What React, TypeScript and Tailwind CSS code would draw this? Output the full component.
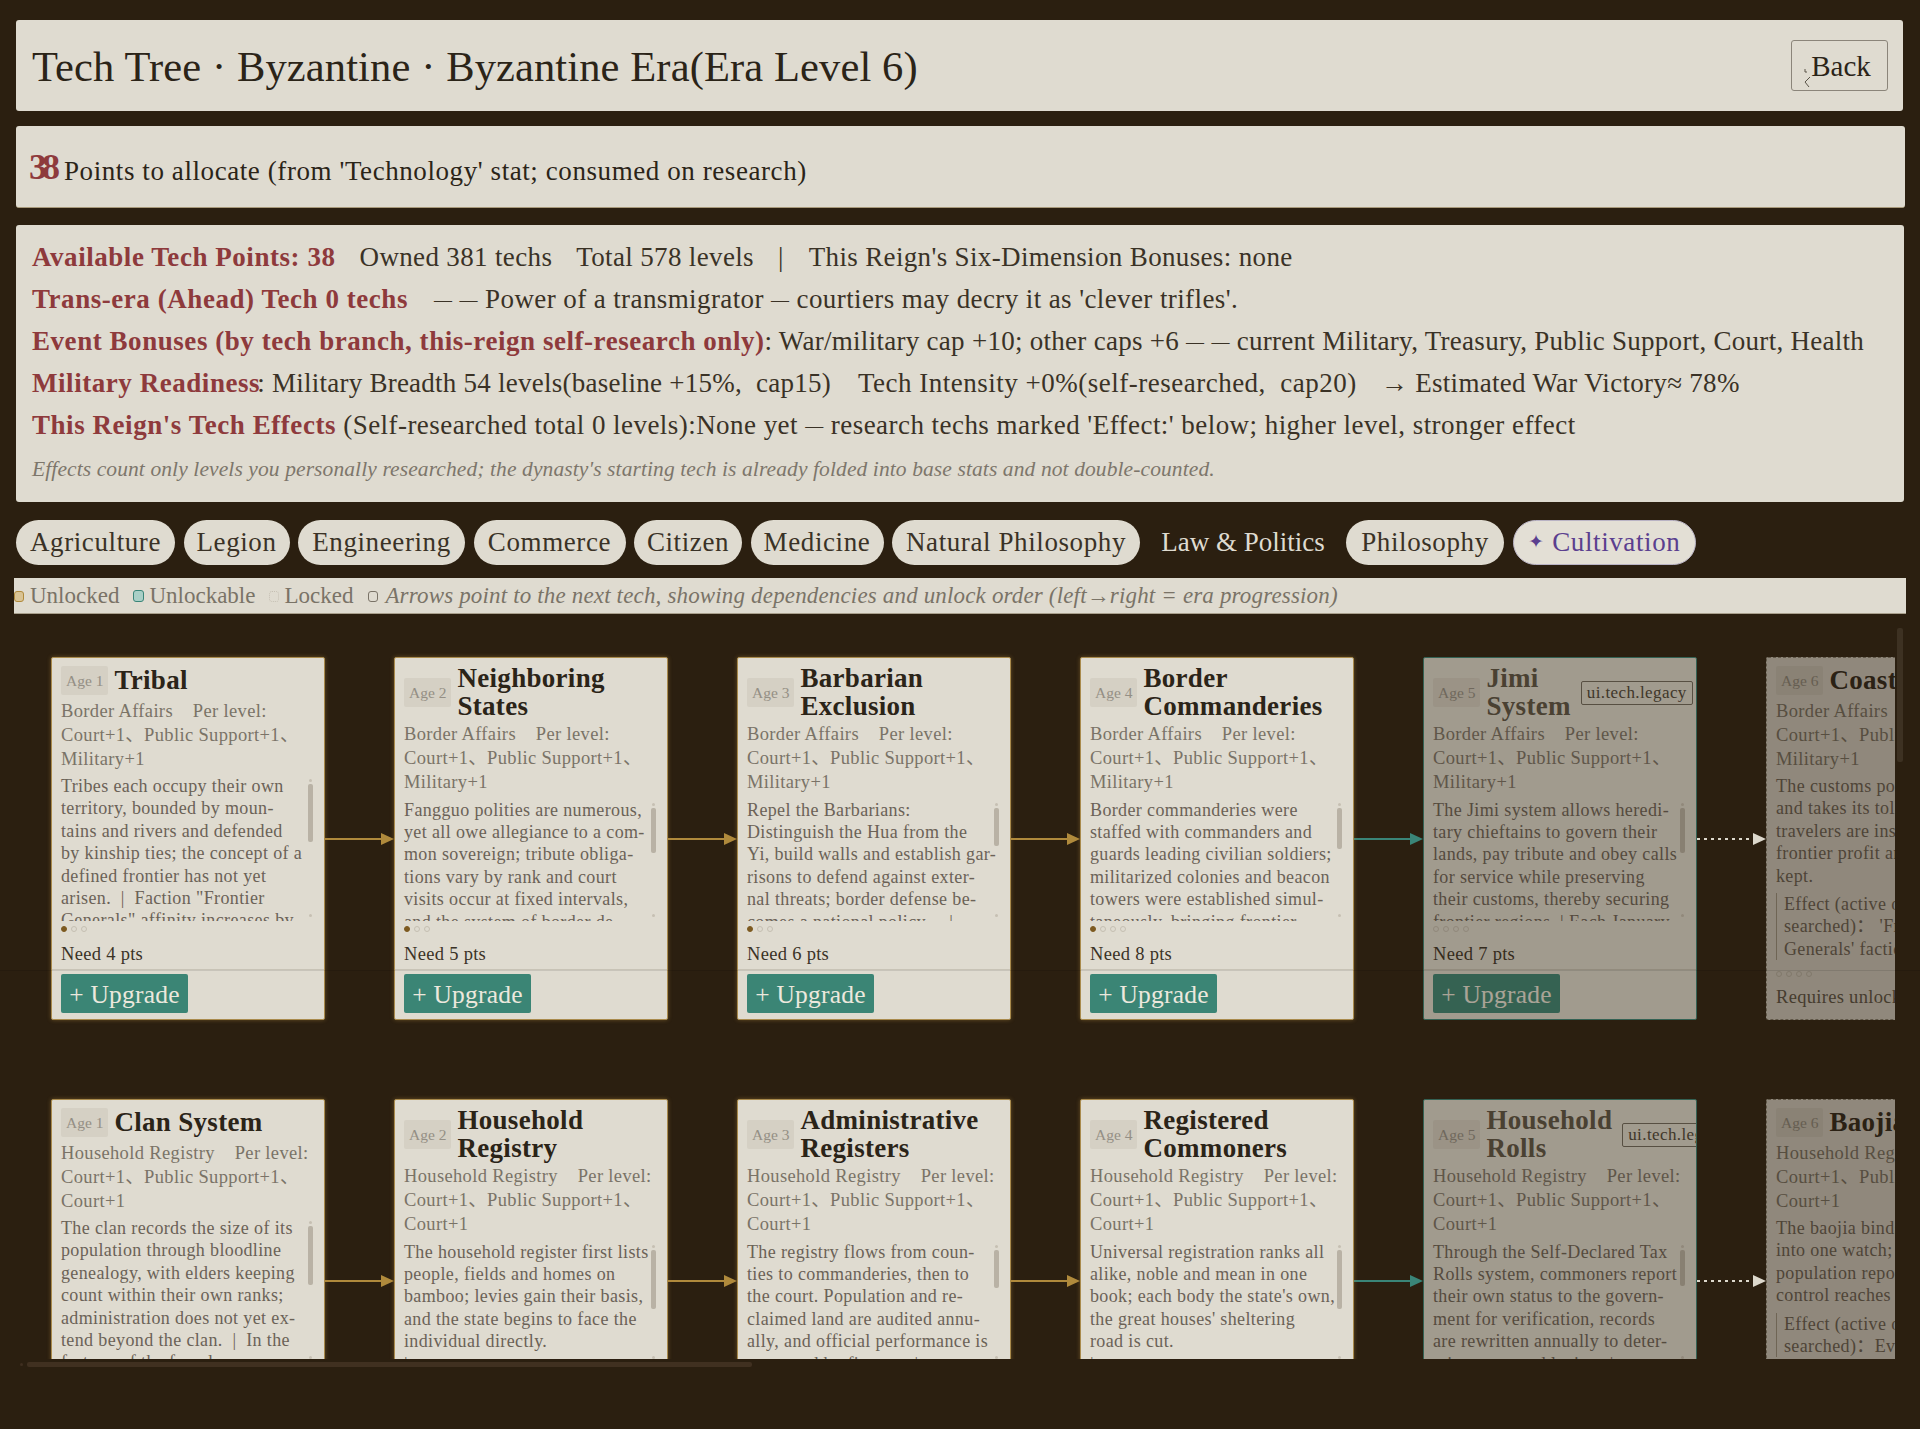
import React from "react";

const F = "font-['Liberation_Serif','Noto_Sans_CJK_SC',serif]";

type C = { age: number; title: string[]; dept: string; last: string; desc: string[]; need: string; dots: number; filled: boolean; thumb: number; thumbLen: number; state: "on" | "next" | "far"; legacy?: boolean; effect?: string[] };

function Arrow({ kind }: { kind: "gold" | "teal" | "dot" }) {
  const col = kind === "gold" ? "#b08a3c" : kind === "teal" ? "#3a8578" : "#ddd8cc";
  return (
    <svg width="69" height="16" viewBox="0 0 69 16" className="shrink-0 self-center">
      <line x1="0" y1="8" x2="58" y2="8" stroke={col} strokeWidth="2" strokeDasharray={kind === "dot" ? "3 4" : undefined} />
      <polygon points="56,2 69,8 56,14" fill={col} />
    </svg>
  );
}

function Card({ c }: { c: C }) {
  const box =
    c.state === "on"
      ? "border-[#a98a4c] shadow-[0_0_4px_rgba(176,138,60,0.45)]"
      : c.state === "next"
        ? "border-[#3a8578] opacity-[0.66]"
        : "border-dashed border-[#8a8475] opacity-[0.56]";
  return (
    <div className={`relative flex h-[363px] w-[274px] shrink-0 flex-col overflow-hidden rounded-[2px] border bg-[#dfdbd0] ${box}`}>
      <div className="flex min-h-[38.5px] items-center pl-[9px] pt-[7px]">
        <span className="flex h-[29px] shrink-0 items-center rounded-[2px] bg-[#d5d0c4] px-[5px] text-[15.5px] text-[#948f85]">Age {c.age}</span>
        <div className={`ml-[6px] shrink-0 whitespace-nowrap text-[27px] font-bold leading-[27.5px] tracking-[0.3px] ${c.state === "next" ? "text-[#5a5345]" : "text-[#2b2418]"}`}>
          {c.title.map((t) => (
            <div key={t}>{t}</div>
          ))}
        </div>
        {c.legacy && (
          <span className="ml-[10px] shrink-0 rounded-[2px] border border-[#6e685c] px-[5px] text-[17px] leading-[22px] tracking-[0.4px] text-[#4a4437]">ui.tech.legacy</span>
        )}
      </div>
      <div className="mt-[2px] pl-[9px] text-[18.5px] leading-[24px] tracking-[0.35px] text-[#7a7367]">
        <div className="whitespace-pre">{c.dept}{"    "}Per level:</div>
        <div className="whitespace-nowrap">Court+1、Public Support+1、</div>
        <div>{c.last}</div>
      </div>
      <div className="relative mt-[4.5px] min-h-0 flex-1 overflow-hidden pl-[9px] text-[18px] leading-[22.4px] tracking-[0.37px] text-[#6b6257]">
        {c.desc.map((l, i) => (
          <div key={i} className="whitespace-pre">{l}</div>
        ))}
        {c.effect && (
          <div className="mt-[6px] border-l border-[#a59d8c] pl-[7px]">
            {c.effect.map((l, i) => (
              <div key={i} className="whitespace-pre">{l}</div>
            ))}
          </div>
        )}
        {!c.effect && (
          <>
            <div className="absolute right-[12px] top-[4px] h-[3px] w-[3px] rounded-full bg-[#c6c0b3]" />
            <div className="absolute right-[11px] w-[5px] rounded-[2px] bg-[#b9b2a5]" style={{ top: c.thumb, height: c.thumbLen }} />
            <div className="absolute bottom-[4px] right-[12px] h-[3px] w-[3px] rounded-full bg-[#c6c0b3]" />
          </>
        )}
      </div>
      <div className="flex h-[16px] shrink-0 items-center gap-[4px] pl-[9px]">
        {Array.from({ length: c.dots }).map((_, i) => (
          <span key={i} className={`h-[6px] w-[6px] rounded-full border ${i === 0 && c.filled ? "border-[#7d5a20] bg-[#7d5a20]" : "border-[#c5bfb2]"}`} />
        ))}
      </div>
      {c.state === "far" ? (
        <div className="pb-[10px] pl-[9px] pt-[3px] text-[18.5px] leading-[24px] tracking-[0.3px] text-[#5b5347]">Requires unlocking prior tech</div>
      ) : (
        <>
          <div className="flex h-[32px] shrink-0 items-center pl-[9px] pt-[4px] text-[18.5px] tracking-[0.3px] text-[#3a3226]">{c.need}</div>
          <div className="shrink-0 border-t border-[#c8c3b6] pb-[6px] pl-[9px] pt-[4px]">
            <button className="flex h-[39px] w-[127px] items-center justify-center rounded-[2px] bg-[#3b8575] pt-[3px] text-[25.5px] tracking-[0.2px] text-[#ece8dd]">+ Upgrade</button>
          </div>
        </>
      )}
    </div>
  );
}

const borderMeta = { dept: "Border Affairs", last: "Military+1" };
const houseMeta = { dept: "Household Registry", last: "Court+1" };

const row1: C[] = [
  { ...borderMeta, age: 1, title: ["Tribal"], need: "Need 4 pts", dots: 3, filled: true, thumb: 9, thumbLen: 58, state: "on", desc: ["Tribes each occupy their own", "territory, bounded by moun-", "tains and rivers and defended", "by kinship ties; the concept of a", "defined frontier has not yet", "arisen.  |  Faction \"Frontier", "Generals\" affinity increases by"] },
  { ...borderMeta, age: 2, title: ["Neighboring", "States"], need: "Need 5 pts", dots: 3, filled: true, thumb: 9, thumbLen: 45, state: "on", desc: ["Fangguo polities are numerous,", "yet all owe allegiance to a com-", "mon sovereign; tribute obliga-", "tions vary by rank and court", "visits occur at fixed intervals,", "and the system of border de-"] },
  { ...borderMeta, age: 3, title: ["Barbarian", "Exclusion"], need: "Need 6 pts", dots: 3, filled: true, thumb: 9, thumbLen: 38, state: "on", desc: ["Repel the Barbarians:", "Distinguish the Hua from the", "Yi, build walls and establish gar-", "risons to defend against exter-", "nal threats; border defense be-", "comes a national policy.    |"] },
  { ...borderMeta, age: 4, title: ["Border", "Commanderies"], need: "Need 8 pts", dots: 4, filled: true, thumb: 9, thumbLen: 41, state: "on", desc: ["Border commanderies were", "staffed with commanders and", "guards leading civilian soldiers;", "militarized colonies and beacon", "towers were established simul-", "taneously, bringing frontier"] },
  { ...borderMeta, age: 5, title: ["Jimi", "System"], need: "Need 7 pts", dots: 4, filled: false, thumb: 9, thumbLen: 45, state: "next", legacy: true, desc: ["The Jimi system allows heredi-", "tary chieftains to govern their", "lands, pay tribute and obey calls", "for service while preserving", "their customs, thereby securing", "frontier regions. | Each January"] },
  { ...borderMeta, age: 6, title: ["Coastal Customs"], need: "", dots: 4, filled: false, thumb: 0, thumbLen: 0, state: "far", desc: ["The customs post inspects goods", "and takes its toll on the ships;", "travelers are inspected and", "frontier profit and order are", "kept."], effect: ["Effect (active once re-", "searched)： 'Frontier", "Generals' faction affinity"] },
];

const row2: C[] = [
  { ...houseMeta, age: 1, title: ["Clan System"], need: "Need 4 pts", dots: 3, filled: true, thumb: 9, thumbLen: 59, state: "on", desc: ["The clan records the size of its", "population through bloodline", "genealogy, with elders keeping", "count within their own ranks;", "administration does not yet ex-", "tend beyond the clan.  |  In the", "fortune of the founder"] },
  { ...houseMeta, age: 2, title: ["Household", "Registry"], need: "Need 5 pts", dots: 3, filled: true, thumb: 9, thumbLen: 59, state: "on", desc: ["The household register first lists", "people, fields and homes on", "bamboo; levies gain their basis,", "and the state begins to face the", "individual directly.", "|"] },
  { ...houseMeta, age: 3, title: ["Administrative", "Registers"], need: "Need 6 pts", dots: 3, filled: true, thumb: 9, thumbLen: 38, state: "on", desc: ["The registry flows from coun-", "ties to commanderies, then to", "the court. Population and re-", "claimed land are audited annu-", "ally, and official performance is", "measured by figures.  |"] },
  { ...houseMeta, age: 4, title: ["Registered", "Commoners"], need: "Need 8 pts", dots: 4, filled: true, thumb: 9, thumbLen: 59, state: "on", desc: ["Universal registration ranks all", "alike, noble and mean in one", "book; each body the state's own,", "the great houses' sheltering", "road is cut.", "|"] },
  { ...houseMeta, age: 5, title: ["Household", "Rolls"], need: "Need 7 pts", dots: 4, filled: false, thumb: 9, thumbLen: 36, state: "next", legacy: true, desc: ["Through the Self-Declared Tax", "Rolls system, commoners report", "their own status to the govern-", "ment for verification, records", "are rewritten annually to deter-", "mine taxes and levies.  |"] },
  { ...houseMeta, age: 6, title: ["Baojia Watch"], need: "", dots: 4, filled: false, thumb: 0, thumbLen: 0, state: "far", desc: ["The baojia binds ten households", "into one watch; every family's", "population reports upward, and", "control reaches every village."], effect: ["Effect (active once re-", "searched)：Every year"] },
];

function Row({ cards, className }: { cards: C[]; className?: string }) {
  const kinds: ("gold" | "teal" | "dot")[] = ["gold", "gold", "gold", "teal", "dot"];
  return (
    <div className={`flex ${className ?? ""}`}>
      {cards.map((c, i) => (
        <React.Fragment key={c.title[0]}>
          <Card c={c} />
          {i < kinds.length && <Arrow kind={kinds[i]} />}
        </React.Fragment>
      ))}
    </div>
  );
}

const tabs: [string, string][] = [
  ["Agriculture", "w-[159px]"],
  ["Legion", "w-[106px]"],
  ["Engineering", "w-[167px]"],
  ["Commerce", "w-[152px]"],
  ["Citizen", "w-[108px]"],
  ["Medicine", "w-[133px]"],
  ["Natural Philosophy", "w-[248px]"],
];

const R = "font-bold tracking-[0.55px] text-[#8e3a3c]";
const D = () => <span className="align-[2px] text-[18px] leading-[0]">—</span>;
const L = "h-[42px] whitespace-pre";

export default function App() {
  return (
    <div className={`${F} relative h-[1429px] w-[1920px] overflow-hidden bg-[#2b1f10] pl-4 pt-5 text-[#2b2418]`}>
      <header className="flex h-[91px] w-[1887px] items-center justify-between rounded-[3px] bg-[#dfdbd0] pl-4 pr-[15px]">
        <h1 className="pt-[3px] text-[42.5px] font-normal tracking-[0.12px]">Tech Tree · Byzantine · Byzantine Era(Era Level 6)</h1>
        <button className="relative flex h-[51px] w-[97px] items-center justify-center rounded-[3px] border border-[#8b857a] pl-[3px] pt-[3px] text-[29px]">
          <svg width="12" height="22" viewBox="0 0 12 22" className="absolute left-[11px] top-[26px]" fill="none" stroke="#5a5448" strokeWidth="1">
            <path d="M2 2v3h2" />
            <path d="M7 10L2 15l4 5" />
          </svg>
          Back
        </button>
      </header>

      <section className="mt-[15px] flex h-[82px] w-[1889px] items-center rounded-[3px] border-b border-[#a8997a] bg-[#dfdbd0] pl-[13px]">
        <span className="mr-[9px] text-[36px] font-bold leading-none tracking-[-5px] text-[#8e3a3c]">38</span>
        <span className="pt-[10px] text-[27px] tracking-[0.58px]">Points to allocate (from 'Technology' stat; consumed on research)</span>
      </section>

      <section className="mt-[17px] h-[277px] w-[1888px] rounded-[3px] bg-[#dfdbd0] pl-4 pt-[11px] text-[27px] leading-[42px] tracking-[0.35px] text-[#3a3226]">
        <div className={L}><span className={R}>Available Tech Points: 38</span><span className="ml-[24px]">Owned 381 techs</span><span className="ml-[24px]">Total 578 levels</span><span className="ml-[24px]">|</span><span className="ml-[25px]">This Reign's Six-Dimension Bonuses: none</span></div>
        <div className={L}><span className={R}>Trans-era (Ahead) Tech 0 techs</span><span className="ml-[26px] tracking-[0.4px]"><D /> <D /> Power of a transmigrator <D /> courtiers may decry it as 'clever trifles'.</span></div>
        <div className={L}><span className={R}>Event Bonuses (by tech branch, this-reign self-research only)</span><span className="tracking-[0.28px]">: War/military cap +10; other caps +6 <D /> <D /> current Military, Treasury, Public Support, Court, Health</span></div>
        <div className={L}><span className={R}>Military Readiness</span><span className="-ml-[3px] tracking-[0.25px]">: Military Breadth 54 levels(baseline +15%,  cap15)</span><span className="ml-[27px] tracking-[0.5px]">Tech Intensity +0%(self-researched,  cap20)</span><span className="ml-[24px] tracking-[0.3px]">→ Estimated War Victory≈ 78%</span></div>
        <div className={L}><span className={R}>This Reign's Tech Effects</span><span className="tracking-[0.45px]"> (Self-researched total 0 levels):None yet <D /> research techs marked 'Effect:' below; higher level, stronger effect</span></div>
        <div className="mt-[2px] text-[21.5px] italic tracking-[0.1px] text-[#7d766b]">Effects count only levels you personally researched; the dynasty's starting tech is already folded into base stats and not double-counted.</div>
      </section>

      <nav className="mt-[17px] flex h-[46px] gap-[8.5px] pt-[1px] text-[27px] tracking-[0.6px]">
        {tabs.map(([t, w]) => (
          <span key={t} className={`flex ${w} items-center justify-center rounded-full bg-[#dfdbd0] text-[#3a3226]`}>{t}</span>
        ))}
        <span className="flex w-[189px] items-center justify-center tracking-normal text-[#dfdbd0]">Law &amp; Politics</span>
        <span className="flex w-[158px] items-center justify-center rounded-full bg-[#dfdbd0] text-[#3a3226]">Philosophy</span>
        <span className="flex w-[183px] items-center justify-center rounded-full border border-[#b9b3c4] bg-[#e3dfd5] text-[#5b3f8f]"><span className="mr-[8px] text-[19px]">✦</span>Cultivation</span>
      </nav>

      <div className="-ml-[2px] mt-[13px] flex h-[36px] w-[1892px] items-center border-b border-[#a89f8c] bg-[#dfdbd0] pt-[1px] text-[23px] text-[#7a7367]">
        <span className="h-[11px] w-[10px] rounded-[3px] border border-[#b08a3c] bg-[#d9c394]" />
        <span className="ml-[6px]">Unlocked</span>
        <span className="ml-[14px] h-[12px] w-[11px] rounded-[3px] border border-[#3a8578] bg-[#a9cfc6]" />
        <span className="ml-[5px]">Unlockable</span>
        <span className="ml-[14px] h-[11px] w-[10px] rounded-[3px] border border-dotted border-[#c5bfb2]" />
        <span className="ml-[5px]">Locked</span>
        <span className="ml-[15px] h-[11px] w-[10px] rounded-[3px] border border-[#7a7367]" />
        <span className="ml-[7px] italic tracking-[0.16px]">Arrows point to the next tech, showing dependencies and unlock order (left→right = era progression)</span>
      </div>

      <div className="-ml-[2px] h-[745px] w-[1881px] overflow-hidden pl-[37px] pt-[43px]">
        <Row cards={row1} />
        <Row cards={row2} className="mt-[79px]" />
      </div>
      <div className="ml-[4px] mt-[3px] flex h-[5px] items-center gap-[4px]">
        <span className="h-[3px] w-[3px] rounded-full bg-[#3f2f20]" />
        <span className="h-[5px] w-[725px] rounded-[2px] bg-[#403020]" />
      </div>

      <div className="absolute left-[1897px] top-[628px] h-[134px] w-[6px] rounded-[2px] bg-[#3d3122]" />
      <div className="pointer-events-none absolute left-0 top-[970px] h-px w-full bg-black/10" />
    </div>
  );
}
